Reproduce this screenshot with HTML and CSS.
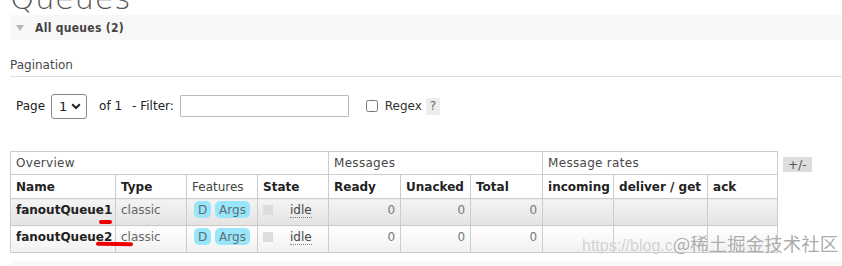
FILE: index.html
```html
<!DOCTYPE html>
<html lang="en">
<head>
  <meta charset="UTF-8">
  <meta name="viewport" content="width=device-width, initial-scale=1.0">
  <title>Queues</title>
  <link rel="stylesheet" href="styles.css">
</head>
<body>

  <h1 class="title">Queues</h1>

  <div class="section">
    <div class="sectionHead">
      <span class="toggle"></span>
      <span class="sectionTitle">All queues (2)</span>
    </div>

    <div class="sectionBody">
      <h3 class="subTitle">Pagination</h3>

      <div class="filterRow">
        <label class="fieldLabel" for="pageSelect">Page</label>
        <span class="selectWrap">
          <select id="pageSelect" class="pageSelect">
            <option>1</option>
          </select>
          <svg class="chevron" width="10" height="7" viewBox="0 0 10 7">
            <path d="M1.2 1.2 L5 5 L8.8 1.2" fill="none" stroke="#222" stroke-width="2"/>
          </svg>
        </span>
        <span class="ofPages">of 1</span>
        <label class="fieldLabel" for="filterInput">- Filter:</label>
        <input type="text" id="filterInput" class="filterInput">
        <input type="checkbox" id="regexBox" class="regexBox">
        <label class="regexLabel" for="regexBox">Regex</label>
        <span class="help">?</span>
      </div>

      <div class="tableWrap">
        <table class="list">
          <colgroup>
            <col class="cName"><col class="cType"><col class="cFeat"><col class="cState">
            <col class="cReady"><col class="cUnacked"><col class="cTotal">
            <col class="cIncoming"><col class="cDeliver"><col class="cAck">
          </colgroup>
          <thead>
            <tr class="groupRow">
              <th colspan="4">Overview</th>
              <th colspan="3">Messages</th>
              <th colspan="3">Message rates</th>
            </tr>
            <tr class="headRow">
              <th>Name</th>
              <th>Type</th>
              <th class="plain">Features</th>
              <th>State</th>
              <th>Ready</th>
              <th>Unacked</th>
              <th>Total</th>
              <th>incoming</th>
              <th>deliver / get</th>
              <th>ack</th>
            </tr>
          </thead>
          <tbody>
            <tr class="alt1">
              <td class="qName">fanoutQueue1</td>
              <td class="muted">classic</td>
              <td class="features"><span class="badge">D</span> <span class="badge">Args</span></td>
              <td><span class="stateBox"></span><abbr class="stateText">idle</abbr></td>
              <td class="num">0</td>
              <td class="num">0</td>
              <td class="num">0</td>
              <td></td>
              <td></td>
              <td></td>
            </tr>
            <tr class="alt2">
              <td class="qName">fanoutQueue2</td>
              <td class="muted">classic</td>
              <td class="features"><span class="badge">D</span> <span class="badge">Args</span></td>
              <td><span class="stateBox"></span><abbr class="stateText">idle</abbr></td>
              <td class="num">0</td>
              <td class="num">0</td>
              <td class="num">0</td>
              <td></td>
              <td></td>
              <td></td>
            </tr>
          </tbody>
        </table>
        <span class="plusMinus">+/-</span>

        <!-- hand-drawn annotation marks -->
        <span class="mark markOne"></span>
        <span class="mark markTwo"></span>

        <div class="watermark"><span class="wmUrl">https://blog.c</span><span class="wmSite">@稀土掘金技术社区</span></div>
      </div>
    </div>
  </div>

  <div class="sectionHead nextSection"></div>

</body>
</html>
```

FILE: styles.css
```css
body {
  font-family: "DejaVu Sans", Verdana, sans-serif;
  font-size: 12px;
  color: #484848;
  margin: 0;
  padding: 0 0 0 10px;
  overflow: hidden;
}

.title {
  font-family: "DejaVu Sans", sans-serif;
  font-weight: 200;
  font-size: 31px;
  line-height: 26px;
  height: 30px;
  margin: -15px 0 0 0;
  color: #555;
  letter-spacing: 0.5px;
}

.sectionHead {
  display: flex;
  align-items: center;
  height: 25px;
  background-color: #f8f8f8;
}

.toggle {
  width: 0;
  height: 0;
  margin: 1px 11px 0 6px;
  border-left: 4.5px solid transparent;
  border-right: 4.5px solid transparent;
  border-top: 6px solid #b8b8b8;
}

.sectionTitle {
  font-family: "DejaVu Sans Condensed", "DejaVu Sans", sans-serif;
  font-weight: bold;
  font-size: 12px;
  color: #444;
  letter-spacing: 0.3px;
}

.subTitle {
  font-weight: normal;
  font-size: 12px;
  color: #484848;
  margin: 18px 0 0 0;
  padding-bottom: 4px;
  border-bottom: 1px solid #ddd;
}

.filterRow {
  display: flex;
  align-items: center;
  height: 26px;
  margin: 16px 0 0 6px;
  font-size: 12px;
  color: #222;
}

.fieldLabel {
  margin-right: 6px;
}

.selectWrap {
  position: relative;
  display: inline-block;
  margin-right: 12px;
}

.pageSelect {
  appearance: none;
  -webkit-appearance: none;
  width: 36px;
  height: 25px;
  padding: 0 0 0 7px;
  font-family: "DejaVu Sans", sans-serif;
  font-size: 13px;
  color: #222;
  background: #fff;
  border: 1px solid #888;
  border-radius: 3px;
}

.chevron {
  position: absolute;
  right: 6px;
  top: 9px;
  pointer-events: none;
}

.ofPages {
  margin-right: 10px;
}

.filterInput {
  width: 169px;
  height: 22px;
  box-sizing: border-box;
  margin: 0 16px 0 0;
  border: 1px solid #bbb;
  border-radius: 1px;
}

.regexBox {
  width: 12px;
  height: 12px;
  margin: 0 7px 0 1px;
}

.regexLabel {
  margin-right: 4px;
  color: #333;
}

.help {
  display: inline-block;
  width: 14px;
  height: 17px;
  line-height: 17px;
  text-align: center;
  background-color: #eee;
  color: #666;
}

.tableWrap {
  position: relative;
  display: flex;
  align-items: flex-start;
  margin-top: 32px;
}

.list {
  border-collapse: collapse;
  table-layout: fixed;
  width: 768px;
}

.cName { width: 105px; }
.cType { width: 71px; }
.cFeat { width: 71px; }
.cState { width: 71px; }
.cReady { width: 72px; }
.cUnacked { width: 70px; }
.cTotal { width: 72px; }
.cIncoming { width: 71px; }
.cDeliver { width: 94px; }
.cAck { width: 70px; }

.list th,
.list td {
  border: 1px solid #ccc;
  padding: 0 5px;
  text-align: left;
  white-space: nowrap;
  overflow: hidden;
}

.groupRow th {
  height: 22px;
  font-weight: normal;
  color: #484848;
  letter-spacing: 0.3px;
}

.headRow th {
  height: 23px;
  font-weight: bold;
  color: #222;
}

.headRow th.plain {
  font-weight: normal;
  color: #444;
}

.list td {
  height: 27px;
  vertical-align: top;
  padding-top: 4px;
  padding-bottom: 0;
  box-sizing: border-box;
}

.alt1 td {
  background: linear-gradient(#f4f4f4, #e3e3e3);
}

.alt2 td {
  background: linear-gradient(#fff, #f1f1f1);
}

.qName {
  font-weight: bold;
  color: #222;
}

.muted {
  color: #666;
}

.list td.features {
  padding-left: 7px;
  padding-top: 2px;
}

.badge {
  display: inline-block;
  padding: 2px 4px 1px 4px;
  line-height: 14px;
  background-color: #99e6fa;
  border-radius: 5px;
  color: #5a6e78;
}

.stateBox {
  display: inline-block;
  width: 10px;
  height: 10px;
  margin: 2px 17px 0 0;
  vertical-align: top;
  background-color: #ddd;
}

.stateText {
  text-decoration: none;
  border-bottom: 1px dotted #888;
  color: #444;
}

.num {
  text-align: right !important;
  color: #777;
}

.plusMinus {
  margin: 6px 0 0 5px;
  padding: 1px 5px 0 5px;
  height: 14px;
  line-height: 14px;
  background-color: #ddd;
  color: #555;
}

.mark {
  position: absolute;
  height: 4px;
  background-color: #e00;
  border-radius: 2px;
}

.markOne {
  left: 89px;
  top: 69px;
  width: 13px;
}

.markTwo {
  left: 86px;
  top: 91px;
  width: 37px;
  transform: rotate(1deg);
}

.watermark {
  position: absolute;
  left: 572px;
  top: 79px;
  display: flex;
  align-items: baseline;
  white-space: nowrap;
  font-family: "Noto Sans CJK SC", "DejaVu Sans", sans-serif;
  color: rgba(150, 150, 150, 0.8);
  text-shadow: 0 0 1px #fff;
}

.wmUrl {
  font-family: "Liberation Sans", sans-serif;
  font-size: 16px;
  color: rgba(170, 170, 170, 0.55);
}

.wmSite {
  font-size: 18.5px;
}

.nextSection {
  margin-top: 8px;
  height: 10px;
}
```
